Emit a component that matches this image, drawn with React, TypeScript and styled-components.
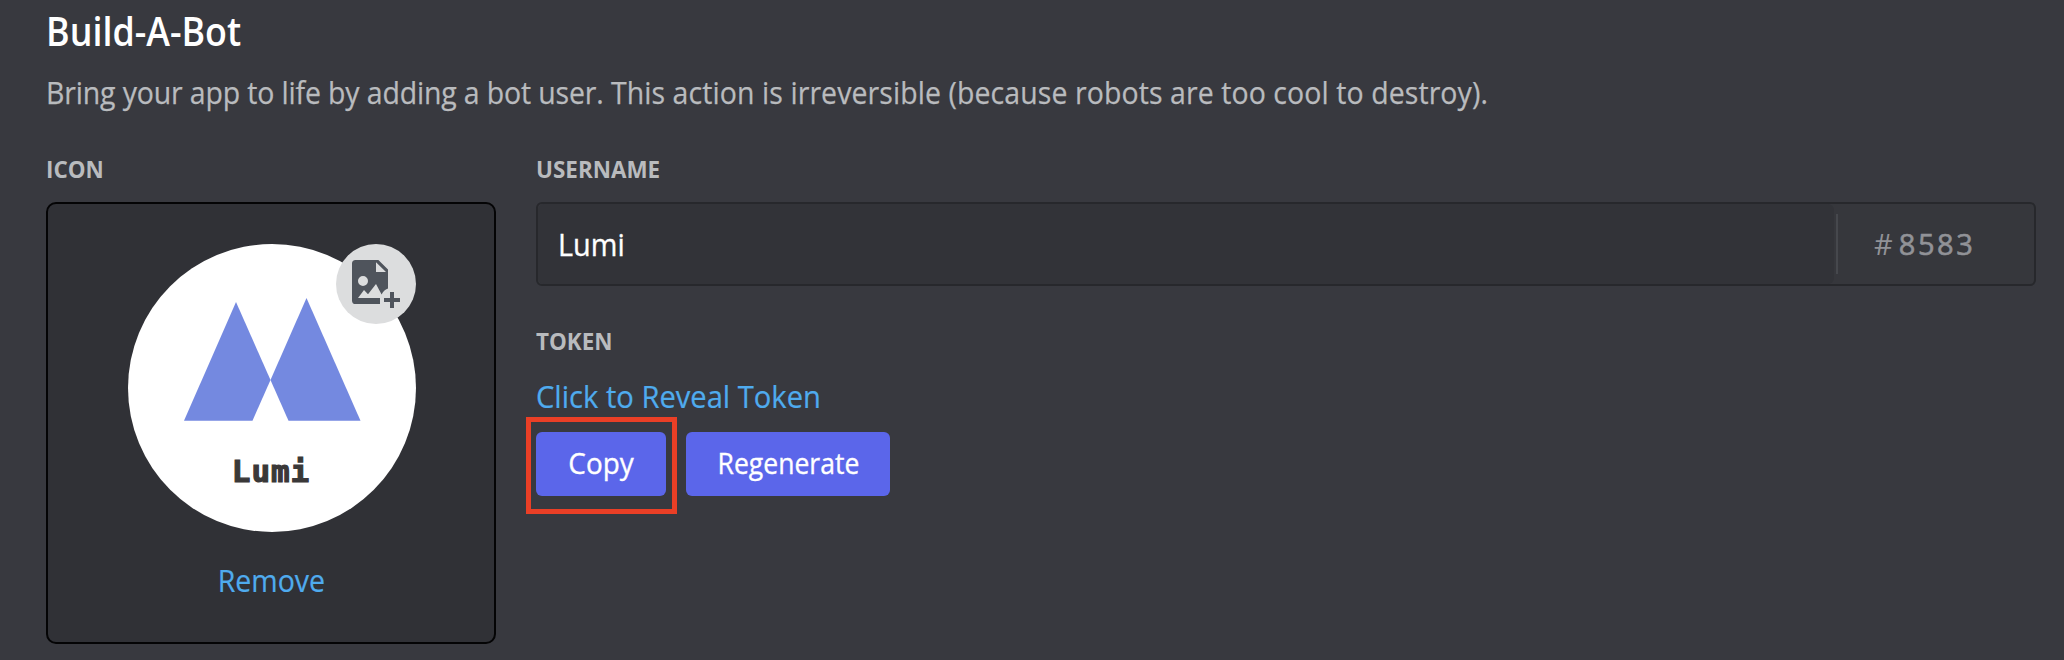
import React from "react";
import styled, { createGlobalStyle } from "styled-components";

const GlobalStyle = createGlobalStyle`
  *, *::before, *::after { box-sizing: border-box; }
  html, body { margin: 0; padding: 0; background: #38393f; }
  body { font-family: "Open Sans", "Noto Sans", sans-serif; overflow: hidden; }
`;

const Page = styled.main`
  width: 2064px;
  height: 660px;
  padding: 11px 28px 0 46px;
  background: #38393f;
  overflow: hidden;
`;

const Title = styled.h1`
  margin: 0 0 21px;
  font-size: 39px;
  font-weight: 600;
  line-height: 40px;
  color: #ffffff;
  white-space: nowrap;
  transform: scaleX(0.919);
  transform-origin: left;
`;

const Description = styled.p`
  margin: 0 0 45px;
  font-size: 31px;
  line-height: 40px;
  color: #b9bbbe;
  white-space: nowrap;
  transform: scaleX(0.918);
  transform-origin: left;
  -webkit-text-stroke: 0.25px #b9bbbe;
`;

const Sentence = styled.span<{ $tracking: number }>`
  letter-spacing: ${(p) => p.$tracking}px;
`;

const Columns = styled.div`
  display: grid;
  grid-template-columns: 450px 1fr;
  column-gap: 40px;
`;

const Column = styled.section`
  display: flex;
  flex-direction: column;
  align-items: stretch;
`;

const Label = styled.h2<{ $top?: number; $bottom: number }>`
  margin: ${(p) => p.$top ?? 0}px 0 ${(p) => p.$bottom}px;
  font-size: 24px;
  font-weight: 700;
  line-height: 24px;
  color: #b9bbbe;
  text-transform: uppercase;
  transform: scaleX(0.935);
  transform-origin: left;
`;

const IconCard = styled.div`
  display: flex;
  flex-direction: column;
  align-items: center;
  height: 442px;
  padding-top: 40px;
  border: 2px solid #040405;
  border-radius: 10px;
  background: #303136;
`;

const Avatar = styled.div`
  position: relative;
  display: flex;
  flex-direction: column;
  align-items: center;
  width: 288px;
  height: 288px;
  margin: 0 0 28px 2px;
  padding-top: 54px;
  border-radius: 50%;
  background: #ffffff;
`;

const Peaks = styled.svg`
  display: block;
  width: 178px;
  height: 123px;
`;

const LogoName = styled.span`
  margin: 30px 2px 0 0;
  font-family: "DejaVu Sans Mono", monospace;
  font-size: 31px;
  font-weight: 700;
  line-height: 40px;
  letter-spacing: 0.9px;
  color: #3a3838;
  -webkit-text-stroke: 1.2px #3a3838;
`;

const UploadBadge = styled.button`
  position: absolute;
  top: 0;
  right: 0;
  display: flex;
  align-items: center;
  justify-content: center;
  width: 80px;
  height: 80px;
  padding: 0;
  border: 0;
  border-radius: 50%;
  background: #dcddde;
`;

const TextLink = styled.a`
  display: block;
  font-size: 31px;
  line-height: 40px;
  color: #4fabee;
  white-space: nowrap;
  transform: scaleX(0.92);
  -webkit-text-stroke: 0.2px #4fabee;
`;

const RevealLink = styled(TextLink)`
  transform: scaleX(0.94);
  transform-origin: left;
`;

const UsernameField = styled.div`
  display: flex;
  align-items: center;
  height: 84px;
  border: 2px solid #27282c;
  border-radius: 6px;
  background: #36373c;
`;

const UsernameValue = styled.div`
  width: 1296px;
  height: 80px;
  padding-left: 20px;
  border-radius: 6px;
  background: #323338;
  font-size: 31px;
  line-height: 80px;
  color: #ffffff;
`;

const Narrow = styled.span<{ $scale: number; $fromLeft?: boolean }>`
  display: inline-block;
  transform: scaleX(${(p) => p.$scale});
  transform-origin: ${(p) => (p.$fromLeft ? "left" : "center")};
  -webkit-text-stroke: 0.35px #ffffff;
`;

const Divider = styled.div`
  width: 2px;
  height: 60px;
  margin: 0 36px 0 2px;
  background: #46484d;
`;

const Discriminator = styled.div`
  display: flex;
  align-items: center;
  gap: 6px;
  font-size: 29px;
  line-height: 40px;
  color: #919297;
`;

const Digits = styled.span`
  letter-spacing: 2.6px;
  -webkit-text-stroke: 0.6px #919297;
`;

const Actions = styled.div`
  display: flex;
  gap: 20px;
  margin-top: 16px;
`;

const Highlight = styled.div`
  position: relative;
  &::after {
    content: "";
    position: absolute;
    top: -15px;
    left: -10px;
    width: 151px;
    height: 97px;
    border: 5px solid #ea3f26;
    pointer-events: none;
  }
`;

const Button = styled.button<{ $width: number }>`
  display: flex;
  align-items: center;
  justify-content: center;
  width: ${(p) => p.$width}px;
  height: 64px;
  padding: 0 0 2px;
  border: 0;
  border-radius: 6px;
  background: #5b66ea;
  color: #ffffff;
  font-family: inherit;
  font-size: 29px;
  font-weight: 500;
  line-height: 40px;
`;

function AddImageIcon() {
  return (
    <svg width="48" height="48" viewBox="0 0 24 24" fill="#4f545c">
      <path
        fillRule="evenodd"
        d="M1.8 0H13.2L18 4.7V14.3C16.5 14.8 15.5 15.9 14.8 17.2L12 12L8 17.1L6 15L3 19H14V22H1.8A1.8 1.8 0 0 1 0 20.2V1.8A1.8 1.8 0 0 1 1.8 0ZM12 1.1V6H17ZM5.5 8A2.5 2.5 0 1 0 5.5 13A2.5 2.5 0 1 0 5.5 8Z"
      />
      <path d="M19 16H21V19H24V21H21V24H19V21H16V19H19Z" />
    </svg>
  );
}

export default function App() {
  return (
    <>
      <GlobalStyle />
      <Page>
        <Title>Build-A-Bot</Title>
        <Description>
          <Sentence $tracking={-0.155}>Bring your app to life by adding a bot user. </Sentence>
          <Sentence $tracking={0.1}>This action is irreversible (because robots are too cool to destroy).</Sentence>
        </Description>
        <Columns>
          <Column>
            <Label $bottom={21}>Icon</Label>
            <IconCard>
              <Avatar>
                <Peaks viewBox="0 0 178 123" fill="#7489e0">
                  <path d="M53 4L87.500 82L69.500 122.700H1Z" />
                  <path d="M123.500 0L177.500 122.700H105.500L87.500 82Z" />
                </Peaks>
                <LogoName>Lumi</LogoName>
                <UploadBadge aria-label="Change icon">
                  <AddImageIcon />
                </UploadBadge>
              </Avatar>
              <TextLink>Remove</TextLink>
            </IconCard>
          </Column>
          <Column>
            <Label $bottom={21}>Username</Label>
            <UsernameField>
              <UsernameValue>
                <Narrow $scale={0.93} $fromLeft>
                  Lumi
                </Narrow>
              </UsernameValue>
              <Divider />
              <Discriminator>
                <span>#</span>
                <Digits>8583</Digits>
              </Discriminator>
            </UsernameField>
            <Label $top={43} $bottom={23}>
              Token
            </Label>
            <RevealLink>Click to Reveal Token</RevealLink>
            <Actions>
              <Highlight>
                <Button $width={130}>
                  <Narrow $scale={0.96}>Copy</Narrow>
                </Button>
              </Highlight>
              <Button $width={204}>
                <Narrow $scale={0.915}>Regenerate</Narrow>
              </Button>
            </Actions>
          </Column>
        </Columns>
      </Page>
    </>
  );
}
